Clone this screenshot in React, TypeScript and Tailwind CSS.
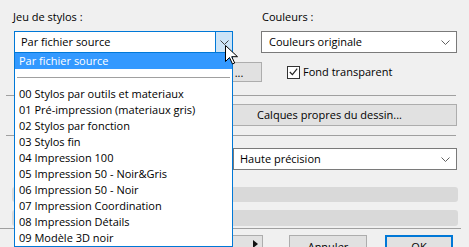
import React from 'react'

const STYLOS = [
  '00 Stylos par outils et materiaux',
  '01 Pré-impression (materiaux gris)',
  '02 Stylos par fonction',
  '03 Stylos fin',
  '04 Impression 100',
  '05 Impression 50 - Noir&Gris',
  '06 Impression 50 - Noir',
  '07 Impression Coordination',
  '08 Impression Détails',
  '09 Modèle 3D noir',
]

function Chevron({ className = '' }: { className?: string }) {
  return (
    <svg width="9" height="5" viewBox="0 0 9 5" fill="none" stroke="currentColor" strokeWidth="1" className={className}>
      <path d="M0.5 0.5l4 4 4-4" />
    </svg>
  )
}

function Cursor() {
  return (
    <svg width="13" height="20" viewBox="0 0 13 20" className="absolute left-[225px] top-[45px]">
      <path
        d="M0.5 0.5v16l4-4 3 6.5 2.2-1-3-6.3h5.8z"
        fill="#fff" stroke="#000" strokeWidth="1" strokeLinejoin="miter"
      />
    </svg>
  )
}

export default function App() {
  return (
    <div className="w-[469px] h-[247px] bg-[#f0f0f0] relative overflow-hidden font-['Open_Sans',sans-serif] text-[11px] text-black">
      {/* en-têtes + listes */}
      <div className="flex pt-[9px] pl-[14px]">
        <div className="flex flex-col w-[219px]">
          <div className="h-[15px] leading-[15px] -ml-px">Jeu de stylos :</div>
          <div className="mt-[7px] h-[22px] flex border border-[#0078d7] bg-white">
            <span className="flex-1 pl-[6px] leading-[20px]">Par fichier source</span>
            <span className="w-[17px] flex items-center justify-center bg-[#cce4f7] border-l border-[#0078d7] text-[#444]">
              <Chevron />
            </span>
          </div>
        </div>
        <div className="flex flex-col ml-[28px] w-[196px]">
          <div className="h-[15px] leading-[15px] ml-px">Couleurs :</div>
          <div className="mt-[7px] h-[22px] flex items-center border border-[#7a7a7a] bg-white pl-[7px] pr-[6px]">
            <span className="flex-1">Couleurs originale</span>
            <Chevron className="text-[#606060]" />
          </div>
        </div>
      </div>

      {/* bouton ... + fond transparent */}
      <div className="flex items-center mt-[9px] pl-[14px] h-[20px]">
        <div className="w-[198px] h-[20px] bg-white border border-[#7a7a7a]" />
        <div className="ml-[4px] w-[46px] h-[20px] bg-[#e1e1e1] border border-[#adadad] flex items-end justify-center leading-[16px]">...</div>
        <div className="ml-[25px] flex items-center">
          <span className="w-[13px] h-[13px] border border-[#333] bg-white flex items-center justify-center">
            <svg width="9" height="8" viewBox="0 0 9 8" fill="none" stroke="#222" strokeWidth="1.2">
              <path d="M0.8 4l2.6 2.6 4.8-6" />
            </svg>
          </span>
          <span className="ml-[3px]">Fond transparent</span>
        </div>
      </div>

      <div className="mt-[13px] ml-[6px] w-[450px] h-px bg-[#a0a0a0]" />

      <div className="mt-[8px] ml-[202px] w-[255px] h-[22px] bg-[#e1e1e1] border border-[#adadad] flex items-center justify-center">
        Calques propres du dessin...
      </div>

      <div className="mt-[9px] ml-[6px] w-[450px] h-px bg-[#a0a0a0]" />

      <div className="mt-[12px] ml-[233px] w-[224px] h-[22px] flex items-center border border-[#7a7a7a] bg-white pl-[6px] pr-[6px]">
        <span className="flex-1">Haute précision</span>
        <Chevron className="text-[#606060]" />
      </div>

      {/* barres */}
      <div className="mt-[17px] ml-[12px] w-[446px] flex flex-col gap-[8px]">
        <div className="h-[15px] rounded-[3px] bg-[#d9d9d9]" />
        <div className="h-[16px] rounded-[3px] bg-[#d9d9d9]" />
      </div>

      <div className="mt-[2px] w-[461px] h-px bg-[#a0a0a0]" />

      {/* boutons du bas */}
      <div className="flex mt-[6px] ml-[190px]">
        <div className="w-[73px] h-[23px] bg-[#e1e1e1] border border-[#adadad] flex justify-end pr-[4px] pt-[4px]">
          <svg width="5" height="8" viewBox="0 0 5 8"><path d="M0 0l5 4-5 4z" fill="#111" /></svg>
        </div>
        <div className="ml-[26px] w-[78px] h-[23px] bg-[#e1e1e1] border border-[#adadad] text-center leading-[21px]">Annuler</div>
        <div className="ml-[18px] w-[68px] h-[23px] bg-[#e1e1e1] border-2 border-[#0078d7] text-center leading-[19px]">OK</div>
      </div>

      {/* liste déroulante ouverte */}
      <div className="absolute left-[14px] top-[52px] w-[219px] h-[195px] bg-white border border-[#0078d7] flex flex-col">
        <div className="h-[16px] leading-[16px] pl-[4px] bg-[#3399ff] text-white">Par fichier source</div>
        <div className="h-[17px] flex items-center px-[2px]">
          <div className="w-full h-px bg-[#a0a0a0]" />
        </div>
        {STYLOS.map(s => (
          <div key={s} className="h-[16px] leading-[16px] pl-[4px] whitespace-nowrap">{s}</div>
        ))}
      </div>

      <Cursor />
    </div>
  )
}
